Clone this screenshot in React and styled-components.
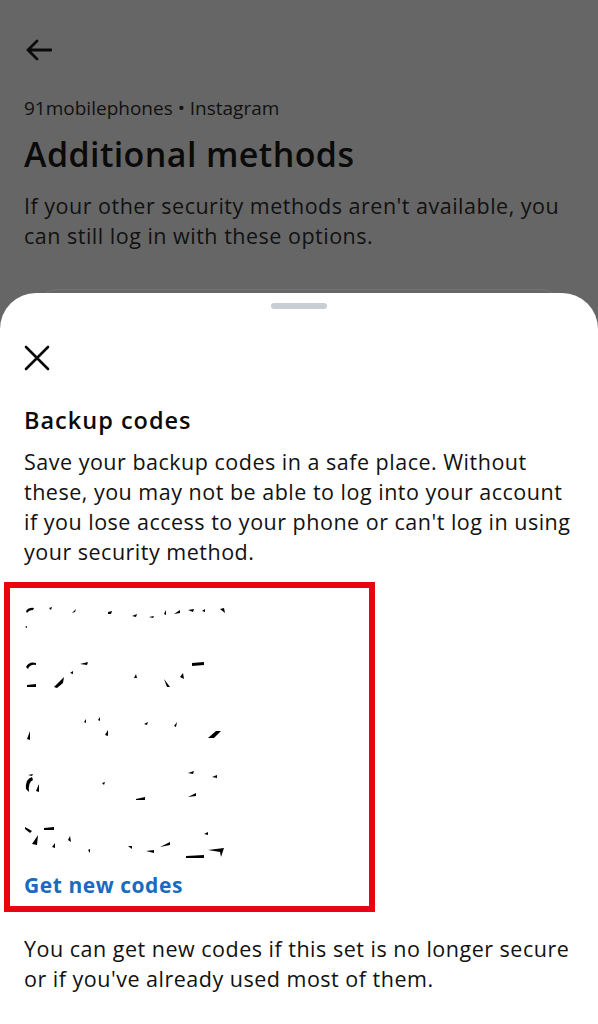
import React from "react";
import styled, { createGlobalStyle } from "styled-components";

const Global = createGlobalStyle`
  html, body { margin: 0; padding: 0; }
  body {
    background: #666666;
    font-family: "Open Sans", "Noto Sans", "Liberation Sans", sans-serif;
    color: #0c0c0c;
    -webkit-font-smoothing: antialiased;
  }
`;

const Screen = styled.div`
  position: relative;
  width: 598px;
  height: 1024px;
  overflow: hidden;
  background: #666666;
`;

const Page = styled.div`
  display: flex;
  flex-direction: column;
  padding: 36px 24px 0;
`;

const IconButton = styled.button`
  display: flex;
  align-items: center;
  justify-content: center;
  width: ${(p) => p.$size}px;
  height: ${(p) => p.$size}px;
  padding: 0;
  border: 0;
  background: transparent;
  color: #0a0a0a;
`;

const Account = styled.div`
  margin-top: 32px;
  font-size: 19px;
  line-height: 24px;
  color: #111;
`;

const Title = styled.h1`
  margin: 13px 0 0;
  font-size: 34px;
  line-height: 42px;
  font-weight: 600;
  letter-spacing: 0.4px;
  color: #0a0a0a;
`;

const Lead = styled.p`
  margin: 16px 0 0;
  font-size: 21.5px;
  line-height: 30px;
  letter-spacing: 0.5px;
  color: #111;
`;

const GhostCard = styled.div`
  margin: 38px 10px 0;
  height: 80px;
  border: 1px solid #727272;
  border-bottom: 0;
  border-radius: 24px 24px 0 0;
`;

const Sheet = styled.div`
  position: absolute;
  left: 0;
  right: 0;
  top: 293px;
  bottom: 0;
  background: #ffffff;
  border-radius: 36px 36px 0 0;
  display: flex;
  flex-direction: column;
`;

const Handle = styled.div`
  align-self: center;
  margin-top: 10px;
  width: 56px;
  height: 6px;
  border-radius: 3px;
  background: #c9ced4;
`;

const SheetBody = styled.div`
  display: flex;
  flex-direction: column;
  padding: 36px 24px 0;
`;

const SectionTitle = styled.h2`
  margin: 34px 0 0;
  font-size: 23.5px;
  line-height: 30px;
  font-weight: 600;
  letter-spacing: 1px;
  color: #0a0a0a;
`;

const Body = styled.p`
  margin: ${(p) => p.$mt || 0}px 0 0;
  font-size: 21.5px;
  line-height: 30px;
  letter-spacing: 0.5px;
  color: #111;
`;

const Highlight = styled.div`
  margin: 15px 0 0 -20px;
  width: 371px;
  box-sizing: border-box;
  border: 6px solid #e8050f;
  padding: 6px 0 8px 14px;
  display: flex;
  flex-direction: column;
`;

const CodeRow = styled.div`
  height: 55px;
  display: flex;
  align-items: center;
`;

const LinkText = styled.a`
  margin-top: 3px;
  font-size: 21px;
  line-height: 26px;
  font-weight: 700;
  letter-spacing: 0.55px;
  color: #1a6bbf;
  text-decoration: none;
`;

const BackArrow = () => (
  <svg width="28" height="24" viewBox="0 0 28 24" fill="none">
    <path d="M27 12H4M13 3L4 12L13 21" stroke="currentColor" strokeWidth="2.8" strokeLinecap="round" strokeLinejoin="round" />
  </svg>
);

const CloseIcon = () => (
  <svg width="26" height="26" viewBox="0 0 26 26" fill="none">
    <path d="M2 2L24 24M24 2L2 24" stroke="currentColor" strokeWidth="2.6" strokeLinecap="round" />
  </svg>
);

/* Redaction residue: small black scraps left where codes were erased */
const rows = [
  [
    "M2 7 Q5 3 10 4 L9 6 Q5 6 3 9Z",
    "M1 23 L3 22 L3 24Z",
    "M25 4 L28 3 L27 6Z",
    "M48 9 L52 5 L51 8Z",
    "M84 8 L88 7 L87 10 L84 10Z",
    "M108 12 L113 10 L112 13Z",
    "M125 13 L130 12 L129 14Z",
    "M140 10 L142 6 L142 11Z",
    "M150 10 L156 6 L156 9Z",
    "M164 6 L170 5 L169 8Z",
    "M178 7 L181 5 L181 8Z",
    "M196 5 L200 4 L201 9Z",
  ],
  [
    "M2 8 Q5 2 12 4 L12 6 Q6 5 4 10Z",
    "M3 26 L12 25 L12 28 L3 28Z",
    "M30 28 L40 18 L39 24 L33 29Z",
    "M56 5 L64 3 L63 6Z",
    "M46 14 L49 12 L49 15Z",
    "M110 19 L112 15 L113 19Z",
    "M140 20 L146 28 L143 28Z",
    "M156 18 L159 14 L160 20Z",
    "M168 4 L180 3 L180 6 L168 7Z",
  ],
  [
    "M3 25 L6 17 L6 26Z",
    "M60 8 L62 5 L62 9Z",
    "M74 6 L76 3 L76 7Z",
    "M81 21 L84 16 L84 22Z",
    "M120 10 L124 8 L123 11Z",
    "M150 12 L153 8 L152 13Z",
    "M184 24 L192 17 L197 17 L190 24Z",
  ],
  [
    "M4 6 L9 5 L8 7Z",
    "M2 20 Q1 10 8 8 L9 11 Q4 13 5 23Z",
    "M12 22 L15 15 L15 23Z",
    "M78 14 L81 13 L80 16Z",
    "M112 30 L121 28 L121 31 L112 31Z",
    "M164 4 L170 2 L169 5Z",
    "M188 8 L193 6 L193 9Z",
    "M164 28 L172 24 L172 27Z",
  ],
  [
    "M1 3 L8 7 L6 9 L1 5Z",
    "M20 4 L30 3 L30 6 L20 6Z",
    "M8 20 L14 11 L13 21Z",
    "M28 23 L31 19 L31 24Z",
    "M44 16 L46 12 L47 18Z",
    "M64 26 L66 25 L66 29Z",
    "M104 22 L108 22 L108 25Z",
    "M122 27 L130 26 L130 29Z",
    "M136 23 L146 18 L146 21Z",
    "M180 10 L184 8 L184 11Z",
    "M162 32 L180 31 L180 34 L162 34Z",
    "M184 26 L200 24 L197 33 L196 28Z",
  ],
];

const CodeScraps = ({ paths }) => (
  <svg width="210" height="36" viewBox="0 0 210 36">
    {paths.map((d, i) => (
      <path key={i} d={d} fill="#000" />
    ))}
  </svg>
);

export default function App() {
  return (
    <>
      <Global />
      <Screen>
        <Page>
          <IconButton $size={28} aria-label="Back">
            <BackArrow />
          </IconButton>
          <Account>91mobilephones • Instagram</Account>
          <Title>Additional methods</Title>
          <Lead>
            If your other security methods aren't available, you can still log in with these options.
          </Lead>
          <GhostCard />
        </Page>
        <Sheet>
          <Handle />
          <SheetBody>
            <IconButton $size={26} aria-label="Close">
              <CloseIcon />
            </IconButton>
            <SectionTitle>Backup codes</SectionTitle>
            <Body $mt={12}>
              Save your backup codes in a safe place. Without these, you may not be able to log into your account if you lose access to your phone or can't log in using your security method.
            </Body>
            <Highlight>
              {rows.map((r, i) => (
                <CodeRow key={i}>
                  <CodeScraps paths={r} />
                </CodeRow>
              ))}
              <LinkText href="#">Get new codes</LinkText>
            </Highlight>
            <Body $mt={22}>
              You can get new codes if this set is no longer secure or if you've already used most of them.
            </Body>
          </SheetBody>
        </Sheet>
      </Screen>
    </>
  );
}
